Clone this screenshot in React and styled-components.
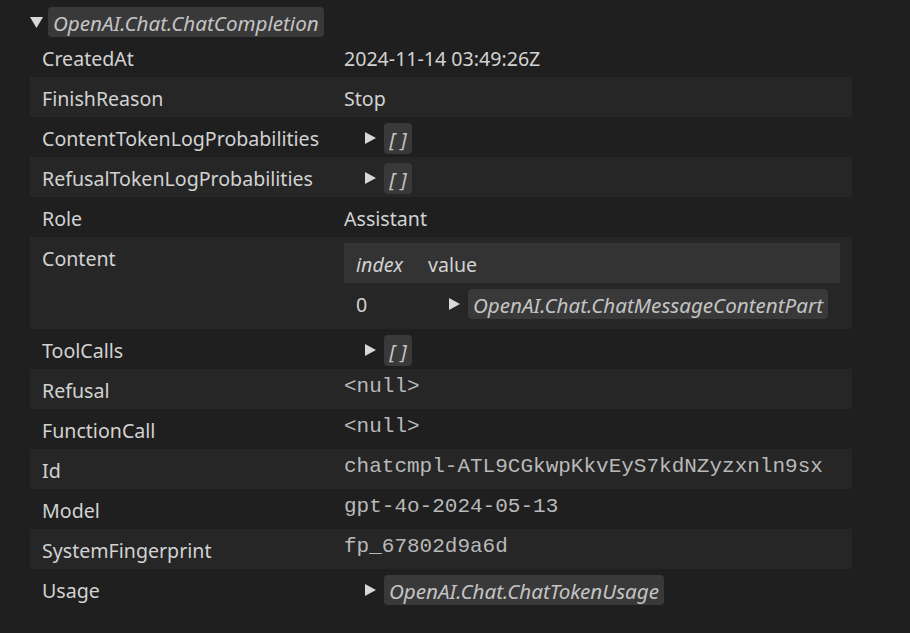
import React from 'react';
import styled, { createGlobalStyle } from 'styled-components';

const GlobalStyle = createGlobalStyle`
  html, body {
    margin: 0;
    padding: 0;
    background: #1f1f1f;
  }
  body {
    font-family: 'Noto Sans', 'Open Sans', sans-serif;
    color: #cccccc;
  }
`;

const Page = styled.div`
  width: 910px;
  height: 633px;
  padding: 7px 58px 0 30px;
  box-sizing: border-box;
  background: #1f1f1f;
`;

const Header = styled.div`
  display: flex;
  align-items: center;
  height: 30px;
  gap: 5px;
`;

const Pill = styled.span`
  display: inline-flex;
  align-items: center;
  justify-content: center;
  height: ${(p) => (p.$small ? 31 : 30)}px;
  min-width: ${(p) => (p.$small ? 28 : 0)}px;
  padding: 1px 5px 0;
  background: #393939;
  border-radius: 4px;
  font-style: italic;
  font-size: 20.6px;
  color: #c4c4c4;
  white-space: nowrap;
  box-sizing: border-box;
`;

const Table = styled.div`
  display: flex;
  flex-direction: column;
`;

const Row = styled.div`
  display: grid;
  grid-template-columns: 302px 1fr;
  min-height: 40px;
  background: ${(p) => (p.$striped ? '#262626' : 'transparent')};
`;

const Key = styled.div`
  padding: 2px 12px 0;
  height: 40px;
  display: flex;
  align-items: center;
  font-size: 19.6px;
  color: #d2d2d2;
  box-sizing: border-box;
`;

const Value = styled.div`
  padding: ${(p) => (p.$nested ? '6px 12px' : '2px 12px 0')};
  min-height: 40px;
  display: flex;
  align-items: center;
  font-size: 19.6px;
  color: #d2d2d2;
  box-sizing: border-box;
`;

const Mono = styled.span`
  font-family: 'Liberation Mono', 'Courier New', monospace;
  font-size: 21px;
  color: #b9b9b9;
  transform: translateY(-4px);
`;

const Expander = styled.span`
  display: inline-flex;
  align-items: center;
  gap: 8px;
  padding-left: 21px;
`;

const SubTable = styled.div`
  flex: 1;
  display: flex;
  flex-direction: column;
`;

const SubRow = styled.div`
  display: grid;
  grid-template-columns: 72px 1fr;
  height: 40px;
  align-items: center;
  background: ${(p) => (p.$head ? '#333333' : 'transparent')};
`;

const SubCell = styled.div`
  padding: 2px 12px 0;
  display: flex;
  align-items: center;
  font-style: ${(p) => (p.$italic ? 'italic' : 'normal')};
  font-size: 19.6px;
  color: #d2d2d2;
`;

const Caret = ({ down }) => (
  <svg width={down ? 13 : 11} height={12} viewBox={down ? '0 0 13 12' : '0 0 11 12'}>
    {down ? (
      <polygon points="0,1 13,1 6.5,12" fill="#d8d8d8" />
    ) : (
      <polygon points="0,0 11,6 0,12" fill="#d8d8d8" />
    )}
  </svg>
);

const Expand = ({ children, small }) => (
  <Expander>
    <Caret />
    <Pill $small={small}>{children}</Pill>
  </Expander>
);

const rows = [
  ['CreatedAt', '2024-11-14 03:49:26Z'],
  ['FinishReason', 'Stop'],
  ['ContentTokenLogProbabilities', <Expand small>[ ]</Expand>],
  ['RefusalTokenLogProbabilities', <Expand small>[ ]</Expand>],
  ['Role', 'Assistant'],
  ['Content', 'nested'],
  ['ToolCalls', <Expand small>[ ]</Expand>],
  ['Refusal', <Mono>&lt;null&gt;</Mono>],
  ['FunctionCall', <Mono>&lt;null&gt;</Mono>],
  ['Id', <Mono>chatcmpl-ATL9CGkwpKkvEyS7kdNZyzxnln9sx</Mono>],
  ['Model', <Mono>gpt-4o-2024-05-13</Mono>],
  ['SystemFingerprint', <Mono>fp_67802d9a6d</Mono>],
  ['Usage', <Expand>OpenAI.Chat.ChatTokenUsage</Expand>],
];

export default function App() {
  return (
    <Page>
      <GlobalStyle />
      <Header>
        <Caret down />
        <Pill>OpenAI.Chat.ChatCompletion</Pill>
      </Header>
      <Table>
        {rows.map(([key, value], i) => (
          <Row key={key + i} $striped={i % 2 === 1}>
            <Key>{key}</Key>
            {value === 'nested' ? (
              <Value $nested>
                <SubTable>
                  <SubRow $head>
                    <SubCell $italic>index</SubCell>
                    <SubCell>value</SubCell>
                  </SubRow>
                  <SubRow>
                    <SubCell>0</SubCell>
                    <SubCell>
                      <Expand>OpenAI.Chat.ChatMessageContentPart</Expand>
                    </SubCell>
                  </SubRow>
                </SubTable>
              </Value>
            ) : (
              <Value>{value}</Value>
            )}
          </Row>
        ))}
      </Table>
    </Page>
  );
}
